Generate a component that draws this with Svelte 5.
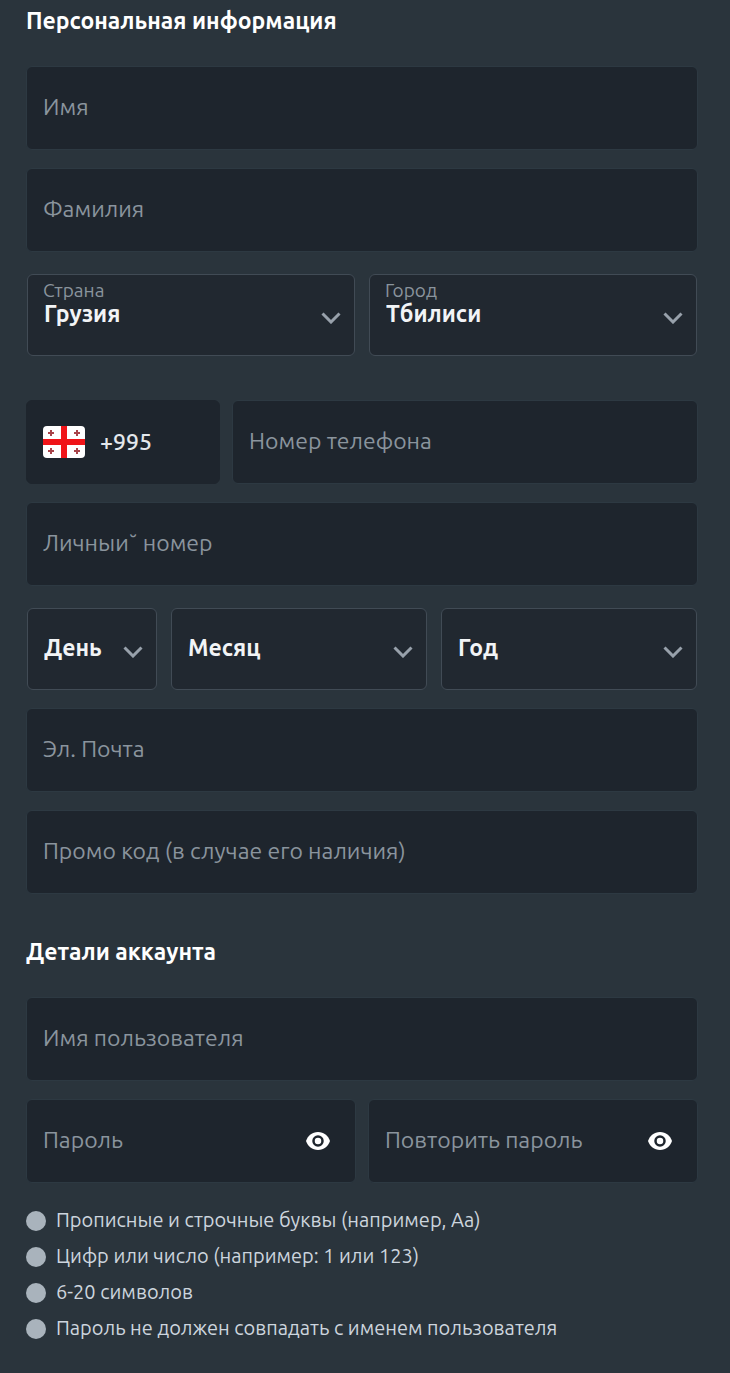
<script lang="ts">
  const rules = [
    'Прописные и строчные буквы (например, Aa)',
    'Цифр или число (например: 1 или 123)',
    '6-20 символов',
    'Пароль не должен совпадать с именем пользователя',
  ]

  const passwords = [
    { id: 'password', label: 'Пароль' },
    { id: 'repeat', label: 'Повторить пароль' },
  ]

  const places = [
    { id: 'country', label: 'Страна', value: 'Грузия' },
    { id: 'city', label: 'Город', value: 'Тбилиси' },
  ]

  const dates = [
    { id: 'day', label: 'День' },
    { id: 'month', label: 'Месяц' },
    { id: 'year', label: 'Год' },
  ]

  let visible = $state({ password: false, repeat: false })
</script>

{#snippet field(id, label, type = 'text')}
  <input {id} name={id} {type} placeholder={label} aria-label={label} />
{/snippet}

{#snippet chevron()}
  <svg class="chevron" viewBox="0 0 20 12" aria-hidden="true">
    <path d="M1.500 1.500 10 10l8.500-8.500" />
  </svg>
{/snippet}

<form>
  <h2>Персональная информация</h2>
  {@render field('name', 'Имя')}
  {@render field('surname', 'Фамилия')}

  <div class="selects places">
    {#each places as place}
      <div class="select">
        <select id={place.id}>
          <option>{place.value}</option>
        </select>
        <label for={place.id}>{place.label}</label>
        {@render chevron()}
      </div>
    {/each}
  </div>

  <div class="phone">
    <button type="button" class="prefix">
      <svg class="flag" viewBox="0 0 42 32" aria-hidden="true">
        <rect width="42" height="32" rx="4" fill="#fff" />
        <path d="M18 0h6v32h-6zM0 13h42v6H0z" fill="#f01418" />
        <path
          d="M8 4v6M5 7h6M34 4v6M31 7h6M8 22v6M5 25h6M34 22v6M31 25h6"
          stroke="#a8444a"
          stroke-width="2"
        />
      </svg>
      +995
    </button>
    {@render field('phone', 'Номер телефона', 'tel')}
  </div>

  {@render field('personal', 'Личныи˘ номер')}

  <div class="selects dates">
    {#each dates as date}
      <div class="select">
        <select id={date.id} aria-label={date.label}>
          <option>{date.label}</option>
        </select>
        {@render chevron()}
      </div>
    {/each}
  </div>

  {@render field('email', 'Эл. Почта', 'email')}
  {@render field('promo', 'Промо код (в случае его наличия)')}

  <h2 class="account">Детали аккаунта</h2>
  {@render field('username', 'Имя пользователя')}

  <div class="passwords">
    {#each passwords as { id, label }}
      <div class="password">
        {@render field(id, label, visible[id] ? 'text' : 'password')}
        <button
          type="button"
          class="eye"
          aria-label="Показать пароль"
          onclick={() => (visible[id] = !visible[id])}
        >
          <svg viewBox="0 0 24 18" aria-hidden="true">
            <path d="M0 9C2 3.500 6 0 12 0s10 3.500 12 9c-2 5.500-6 9-12 9S2 14.500 0 9z" />
            <circle cx="12" cy="9" r="4.500" />
          </svg>
        </button>
      </div>
    {/each}
  </div>

  <ul>
    {#each rules as rule}
      <li>{rule}</li>
    {/each}
  </ul>
</form>

<style>
  :global(body) {
    margin: 0;
    background: #2a343c;
  }

  form {
    display: flex;
    flex-direction: column;
    gap: 18px;
    padding: 8px 32px 26px 26px;
    font-family: Ubuntu, 'Noto Sans', sans-serif;
    color: #fff;
  }

  h2 {
    margin: 0 0 14px;
    font-size: 23px;
    line-height: 26px;
    font-weight: 700;
  }

  .account {
    margin-top: 27px;
  }

  input,
  select,
  .prefix {
    box-sizing: border-box;
    width: 100%;
    min-width: 0;
    height: 84px;
    padding: 0 16px 4px;
    border: 1px solid #2d3942;
    border-radius: 6px;
    background: #1e252d;
    color: #fff;
    font-family: inherit;
    font-size: 23px;
  }

  input::placeholder {
    color: #8a949d;
    opacity: 1;
  }

  .selects,
  .phone,
  .passwords {
    display: grid;
    gap: 12px;
  }

  .selects {
    gap: 14px;
    padding: 4px 1px 0;
  }

  .places,
  .passwords {
    grid-template-columns: 1fr 1fr;
  }

  .places {
    margin-bottom: 26px;
  }

  .dates {
    grid-template-columns: 130px 1fr 1fr;
  }

  .phone {
    grid-template-columns: 194px 1fr;
  }

  .select,
  .password {
    display: grid;
    align-items: center;
  }

  .select > *,
  .password > :global(*) {
    grid-area: 1 / 1;
  }

  select {
    height: 82px;
    appearance: none;
    border-color: #414b55;
    background: #212830;
    color: #f2f4f6;
    font-weight: 700;
  }

  label {
    align-self: start;
    padding: 4px 16px;
    color: #8a949d;
    font-size: 19px;
    line-height: 24px;
    pointer-events: none;
  }

  .chevron {
    justify-self: end;
    width: 20px;
    height: 12px;
    margin: 6px 14px 0 0;
    fill: none;
    stroke: #98a1ab;
    stroke-width: 3;
    pointer-events: none;
  }

  .prefix {
    display: flex;
    align-items: center;
    gap: 15px;
    padding-bottom: 0;
    border-color: #1e252d;
    color: #e4e8ec;
    font-weight: 500;
    line-height: 28px;
  }

  .flag {
    width: 42px;
    height: 32px;
  }

  .eye {
    justify-self: end;
    display: flex;
    margin-right: 26px;
    padding: 0;
    border: 0;
    background: none;
    cursor: pointer;
  }

  .eye svg {
    width: 24px;
    height: 18px;
    fill: #fff;
  }

  .eye circle {
    stroke: #1e252d;
    stroke-width: 2.5;
  }

  ul {
    margin: 2px 0 0;
    padding: 0;
    list-style: none;
  }

  li {
    display: flex;
    align-items: center;
    gap: 10px;
    color: #cdd5de;
    font-size: 20px;
    line-height: 34px;
    padding-bottom: 2px;
  }

  li::before {
    content: '';
    flex: none;
    width: 20px;
    height: 20px;
    margin-top: 2px;
    border-radius: 50%;
    background: #a9b3bc;
  }
</style>
